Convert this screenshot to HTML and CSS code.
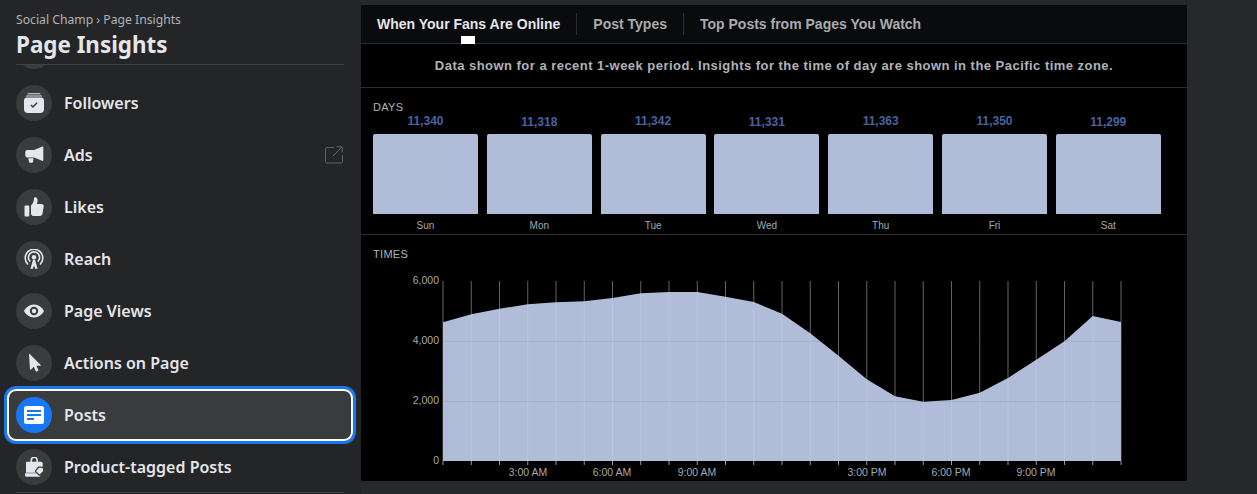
FILE: index.html
```html
<!DOCTYPE html>
<html lang="en">
<head>
    <meta charset="UTF-8">
    <title>Page Insights</title>
    <link rel="stylesheet" href="styles.css">
</head>
<body>
    <aside class="sidebar">
        <header class="sidebar-head">
            <div class="crumbs">Social Champ › Page Insights</div>
            <h1>Page Insights</h1>
        </header>
        <nav class="nav">
            <div class="nav-list">
                <a class="nav-item"><span class="nav-icon"></span></a>
                <a class="nav-item">
                    <span class="nav-icon">
                        <svg viewBox="0 0 20 20"><path d="M4.500 0.300h11a1.200 1.200 0 0 1 1.200 1H3.300a1.200 1.200 0 0 1 1.200-1zM2.800 2.500h14.400a1.200 1.200 0 0 1 1.100 1H1.700a1.200 1.200 0 0 1 1.100-1z"/><path fill-rule="evenodd" d="M3 4.600h14a3 3 0 0 1 3 3V16a4 4 0 0 1-4 4H4a4 4 0 0 1-4-4V7.600a3 3 0 0 1 3-3zM6.400 12.400l2.500 2.500 4.700-4.700-1-1-3.700 3.700-1.500-1.500z"/></svg>
                    </span>
                    <span class="nav-label">Followers</span>
                </a>
                <a class="nav-item">
                    <span class="nav-icon">
                        <svg viewBox="0 0 20 20"><path d="M3.300 5H10L18 1.700a1 1 0 0 1 1.300 1V14.800a1 1 0 0 1-1.300 1L10 12.500H3.300A2 2 0 0 1 1.300 10.500V7a2 2 0 0 1 2-2z"/><path d="M4.300 13.300H9.500L9 17a1 1 0 0 1-1 .8H6A1 1 0 0 1 5 17z"/></svg>
                    </span>
                    <span class="nav-label">Ads</span>
                    <svg class="nav-ext" viewBox="0 0 18 18"><path d="M9 1.500H2a1.500 1.500 0 0 0-1.500 1.500v12.500A1.500 1.500 0 0 0 2 17h14a1.500 1.500 0 0 0 1.500-1.500V9M8 10l9-9M11.500.8h5.700v5.700"/></svg>
                </a>
                <a class="nav-item">
                    <span class="nav-icon">
                        <svg viewBox="0 0 20 20"><path d="M1.400 8.600h3a.9.9 0 0 1 .9.900v9a.9.9 0 0 1-.9.900h-3a.9.9 0 0 1-.9-.9v-9a.9.9 0 0 1 .9-.9zM7 8.400c2-1.800 2.800-4.400 3-7 .1-.9.700-1.300 1.400-1.200 1.400.2 2.200 1.500 2.200 3.200 0 1.300-.3 2.500-.7 3.600h4.800c1.300 0 2.200 1 2 2.200l-1.200 7.600c-.2 1.300-1.200 2.200-2.600 2.200H9.600C8.200 19 7 17.800 7 16.400z"/></svg>
                    </span>
                    <span class="nav-label">Likes</span>
                </a>
                <a class="nav-item">
                    <span class="nav-icon">
                        <svg viewBox="0 0 20 20"><path class="line" d="M4 15.500a8.800 8.800 0 1 1 12 0M6.300 12.700a5.600 5.600 0 1 1 7.400 0"/><circle cx="10" cy="8.300" r="2.200"/><path d="M9 10.800h2l2.600 9h-2.500l-.5-2.200H9.400l-.5 2.200H6.400z"/></svg>
                    </span>
                    <span class="nav-label">Reach</span>
                </a>
                <a class="nav-item">
                    <span class="nav-icon">
                        <svg viewBox="0 0 20 20"><path fill-rule="evenodd" d="M10 3.500c4.600 0 8.300 3 10 6.500-1.700 3.500-5.400 6.500-10 6.500S1.700 13.500 0 10c1.700-3.500 5.400-6.500 10-6.500zM10 5.800a4.200 4.200 0 1 0 0 8.400 4.200 4.200 0 0 0 0-8.400z"/><circle cx="10" cy="10" r="2.200"/></svg>
                    </span>
                    <span class="nav-label">Page Views</span>
                </a>
                <a class="nav-item">
                    <span class="nav-icon">
                        <svg viewBox="0 0 20 20"><path d="M5 1.300c0-.4.400-.6.700-.3l11 11c.3.300.1.800-.3.800h-4l2 4.300c.1.300 0 .6-.3.700l-1.600.7c-.3.100-.6 0-.7-.3l-2-4.400-3 3c-.3.300-.8.100-.8-.3z"/></svg>
                    </span>
                    <span class="nav-label">Actions on Page</span>
                </a>
                <a class="nav-item active">
                    <span class="nav-icon">
                        <svg viewBox="0 0 20 20"><path fill="#fff" d="M2.500 1h15A2.500 2.500 0 0 1 20 3.500v13a2.500 2.500 0 0 1-2.500 2.500h-15A2.500 2.500 0 0 1 0 16.500v-13A2.500 2.500 0 0 1 2.500 1z"/><path fill="#1877f2" d="M3 5h14v2H3zM3 9h14v2H3zM3 13h7v2H3z"/></svg>
                    </span>
                    <span class="nav-label">Posts</span>
                </a>
                <a class="nav-item">
                    <span class="nav-icon">
                        <svg viewBox="0 0 20 20"><path class="line" d="M7.300 5V3.200a2.900 2.900 0 0 1 5.800 0V5"/><path d="M3 4.700h14.200a1.500 1.500 0 0 1 1.500 1.500v9.500H2V5.700a1 1 0 0 1 1-1zM1 16.300h15.500v1.900a1.500 1.500 0 0 1-1.500 1.500H2.500A1.500 1.500 0 0 1 1 18.200z"/><path class="tag" d="M14.800 10l3.700.4c.6.100 1 .5 1 1l.3 2.800-3.700 3.800c-.3.300-.7.300-1 0l-3.400-3.400c-.3-.3-.3-.7 0-1z"/></svg>
                    </span>
                    <span class="nav-label">Product-tagged Posts</span>
                </a>
            </div>
            <div class="nav-rule"></div>
        </nav>
    </aside>

    <main class="panel">
        <div class="tabs">
            <a class="tab active">When Your Fans Are Online</a>
            <a class="tab">Post Types</a>
            <a class="tab">Top Posts from Pages You Watch</a>
            <span class="tab-marker"></span>
        </div>
        <p class="notice">Data shown for a recent 1-week period. Insights for the time of day are shown in the Pacific time zone.</p>

        <section class="days">
            <h2>DAYS</h2>
            <div class="day-bars">
                <div class="day"><span class="day-value">11,340</span><span class="day-bar"></span><span class="day-name">Sun</span></div>
                <div class="day low"><span class="day-value">11,318</span><span class="day-bar"></span><span class="day-name">Mon</span></div>
                <div class="day"><span class="day-value">11,342</span><span class="day-bar"></span><span class="day-name">Tue</span></div>
                <div class="day low"><span class="day-value">11,331</span><span class="day-bar"></span><span class="day-name">Wed</span></div>
                <div class="day"><span class="day-value">11,363</span><span class="day-bar"></span><span class="day-name">Thu</span></div>
                <div class="day"><span class="day-value">11,350</span><span class="day-bar"></span><span class="day-name">Fri</span></div>
                <div class="day low"><span class="day-value">11,299</span><span class="day-bar"></span><span class="day-name">Sat</span></div>
            </div>
        </section>

        <section class="times">
            <h2>TIMES</h2>
            <!-- viewBox keeps page x minus 361 and page y minus 263 -->
            <svg class="times-chart" viewBox="0 0 826 218" width="826" height="218">
                <defs>
                    <path id="gridLines" d="M110.250 18V198M138.500 18V198M166.750 18V198M195 18V198M223.250 18V198M251.500 18V198M279.750 18V198M308 18V198M336.250 18V198M364.500 18V198M392.750 18V198M421 18V198M449.250 18V198M477.500 18V198M505.750 18V198M534 18V198M562.250 18V198M590.500 18V198M618.750 18V198M647 18V198M675.250 18V198M703.500 18V198M731.750 18V198"/>
                </defs>
                <!-- lines show strong on black, then faint on top of the area -->
                <use class="grid-x" href="#gridLines"/>
                <path class="axis" d="M82 18V198M760 18V198"/>
                <path class="area" d="M82 59.300L110.250 51.300L138.500 45.700L166.750 41.300L195 39.300L223.250 38.300L251.500 35L279.750 30.300L308 29L336.250 29L364.500 33.700L392.750 39L421 50.700L449.250 70.300L477.500 92.700L505.750 116.300L534 133.300L562.250 138.700L590.500 137L618.750 129.700L647 115L675.250 96.700L703.500 78.300L731.750 53L760 59V198H82Z"/>
                <use class="grid-soft" href="#gridLines"/>
                <path class="grid-y" d="M82 78.500H760M82 138.500H760"/>
                <path class="ticks" d="M82 198V202M110.250 198V202M138.500 198V202M166.750 198V202M195 198V202M223.250 198V202M251.500 198V202M279.750 198V202M308 198V202M336.250 198V202M364.500 198V202M392.750 198V202M421 198V202M449.250 198V202M477.500 198V202M505.750 198V202M534 198V202M562.250 198V202M590.500 198V202M618.750 198V202M647 198V202M675.250 198V202M703.500 198V202M731.750 198V202M760 198V202"/>
                <text class="tick-y" x="78" y="21">6,000</text>
                <text class="tick-y" x="78" y="81">4,000</text>
                <text class="tick-y" x="78" y="141">2,000</text>
                <text class="tick-y" x="78" y="201">0</text>
                <text class="tick-x" x="167" y="213">3:00 AM</text>
                <text class="tick-x" x="251" y="213">6:00 AM</text>
                <text class="tick-x" x="336" y="213">9:00 AM</text>
                <text class="tick-x" x="506" y="213">3:00 PM</text>
                <text class="tick-x" x="590" y="213">6:00 PM</text>
                <text class="tick-x" x="675" y="213">9:00 PM</text>
            </svg>
        </section>
    </main>
</body>
</html>
```

FILE: styles.css
```css
* {
    box-sizing: border-box;
}
html, body {
    height: 100%;
}
body {
    margin: 0;
    display: flex;
    align-items: flex-start;
    overflow: hidden;
    background-color: #27282a;
    font-family: "Liberation Sans", Arial, sans-serif;
}

/* left column */
.sidebar {
    width: 361px;
    height: 494px;
    flex-shrink: 0;
    display: flex;
    flex-direction: column;
    background-color: #242526;
    font-family: "Noto Sans", sans-serif;
}
.sidebar-head {
    margin: 0 17px 0 16px;
    height: 65px;
    padding-top: 11px;
    border-bottom: 1px solid #3e4042;
}
.crumbs {
    font-size: 12.200px;
    line-height: 18px;
    color: #b0b3b8;
}
.sidebar-head h1 {
    margin: 0;
    font-size: 22.400px;
    line-height: 31px;
    font-weight: 700;
    color: #e4e6eb;
}
.nav {
    flex: 1;
    overflow: hidden;
}
.nav-list {
    margin-top: -40px; /* list is scrolled, first item is cut off */
}
.nav-item {
    display: flex;
    align-items: center;
    gap: 12px;
    height: 52px;
    margin: 0 8px 0 7px;
    padding: 0 10px 0 9px;
    border-radius: 9px;
}
.nav-icon {
    width: 36px;
    height: 36px;
    flex-shrink: 0;
    display: flex;
    align-items: center;
    justify-content: center;
    border-radius: 50%;
    background-color: #3a3b3c;
}
.nav-icon svg {
    width: 20px;
    height: 20px;
    fill: #e4e6eb;
}
.nav-icon .line {
    fill: none;
    stroke: #e4e6eb;
    stroke-width: 1.600;
}
.nav-icon .tag {
    stroke: #3a3b3c;
    stroke-width: 1.200;
}
.nav-label {
    flex: 1;
    font-size: 16px;
    font-weight: 600;
    color: #e4e6eb;
}
.nav-ext {
    width: 18px;
    height: 18px;
    fill: none;
    stroke: #5f6164;
    stroke-width: 1;
}
.nav-item.active {
    background-color: #3a3b3c;
    box-shadow: inset 0 0 0 2px #fff, 0 0 0 3px #1877f2;
}
.nav-item.active .nav-icon {
    background-color: #1877f2;
}
.nav-rule {
    margin: -1px 17px 0 16px;
    border-top: 1px solid #3e4042;
}

/* right column */
.panel {
    width: 826px;
    height: 476px;
    margin-top: 5px;
    border-radius: 2px;
    overflow: hidden;
    background-color: #000;
}
.tabs {
    position: relative;
    display: flex;
    align-items: center;
    height: 39px;
    padding-left: 16px;
    background-color: #0a0b0d;
    border-bottom: 1px solid #2b2c2e;
}
.tab {
    height: 22px;
    line-height: 22px;
    padding-right: 16px;
    margin-right: 16px;
    border-right: 1px solid #2b2c2e;
    font-size: 14px;
    font-weight: 700;
    color: #a8abb0;
}
.tab:last-of-type {
    border-right: 0;
}
.tab.active {
    color: #e4e6eb;
}
.tab-marker {
    position: absolute;
    left: 100px;
    bottom: -1px;
    width: 14px;
    height: 8px;
    background-color: #fff;
}
.notice {
    margin: 0;
    height: 44px;
    line-height: 44px;
    text-align: center;
    border-bottom: 1px solid #2b2c2e;
    font-size: 13px;
    font-weight: 700;
    letter-spacing: 0.470px;
    color: #b0b3b8;
}
.days, .times {
    padding: 0 12px;
}
h2 {
    margin: 0;
    font-size: 11px;
    font-weight: 400;
    letter-spacing: 0.300px;
    color: #b0b3b8;
}
.days {
    height: 147px;
    padding-top: 13px;
    border-bottom: 1px solid #2b2c2e;
}
.days h2 {
    line-height: 13px;
}
.day-bars {
    display: flex;
    gap: 8.800px;
}
.day {
    width: 105px;
    display: flex;
    flex-direction: column;
    align-items: center;
}
.day-value {
    height: 20px;
    line-height: 14px;
    font-size: 12px;
    font-weight: 700;
    color: #4a62a0;
}
.day.low .day-value {
    line-height: 17px;
}
.day-bar {
    width: 100%;
    height: 80px;
    border-radius: 2px 2px 0 0;
    background-color: #b1bdd8;
}
.day-name {
    margin-top: 6px;
    line-height: 12px;
    font-size: 10px;
    color: #a6a9ae;
}
.times {
    padding-top: 13px;
}
.times h2 {
    line-height: 13px;
}
.times-chart {
    display: block;
    margin-left: -12px;
    margin-top: 2px;
}
.area {
    fill: #b1bdd8;
}
.grid-x {
    fill: none;
    stroke: rgba(255, 255, 255, 0.3);
    stroke-width: 1;
}
.grid-soft {
    fill: none;
    stroke: rgba(255, 255, 255, 0.12);
    stroke-width: 1;
}
.grid-y {
    fill: none;
    stroke: rgba(0, 0, 0, 0.07);
    stroke-width: 1;
}
.axis {
    fill: none;
    stroke: rgba(255, 255, 255, 0.4);
    stroke-width: 1;
}
.ticks {
    fill: none;
    stroke: rgba(255, 255, 255, 0.6);
    stroke-width: 1;
}
.tick-y, .tick-x {
    font-size: 10.500px;
    fill: #a6a9ae;
}
.tick-y {
    text-anchor: end;
}
.tick-x {
    text-anchor: middle;
}
```
